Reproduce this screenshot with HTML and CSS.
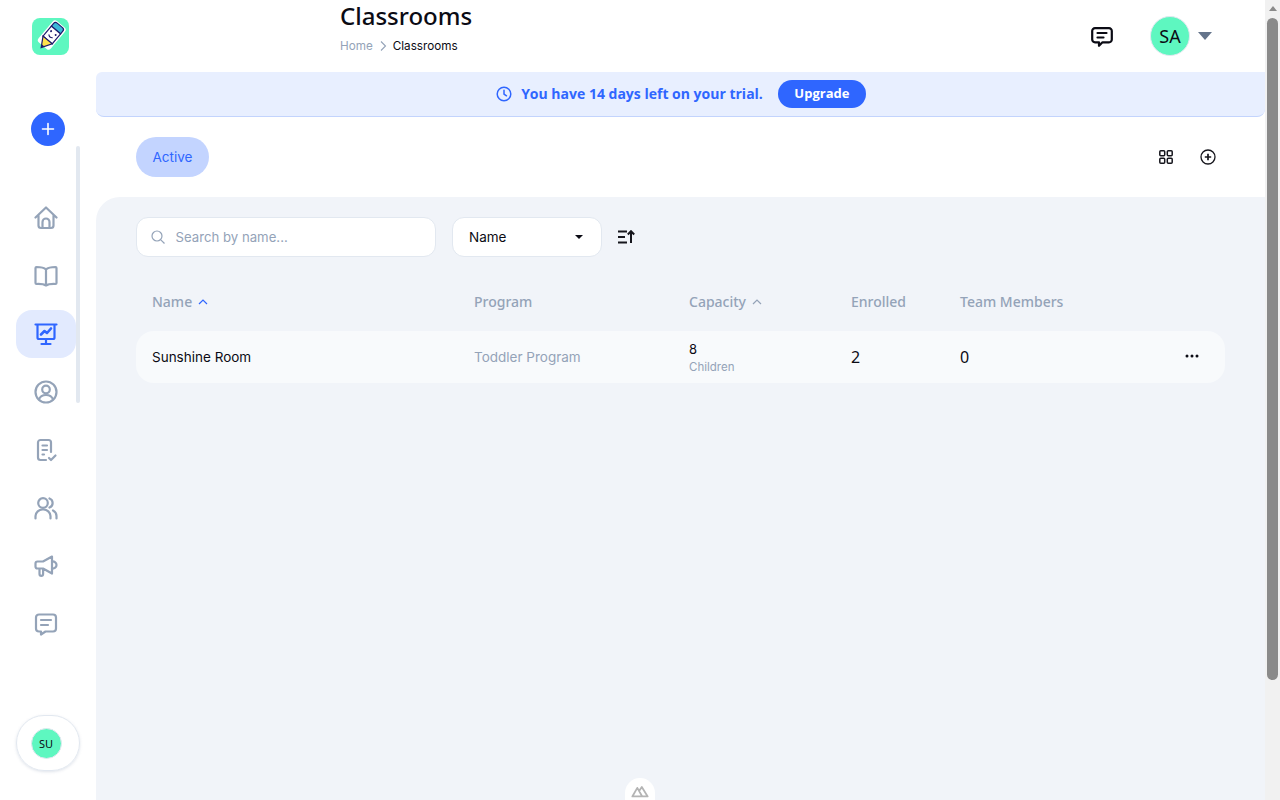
FILE: index.html
```html
<!DOCTYPE html>
<html lang="en">
<head>
    <meta charset="UTF-8">
    <meta name="viewport" content="width=device-width, initial-scale=1.0">
    <title>Classrooms</title>
    <link rel="stylesheet" href="styles.css">
</head>
<body>
    <div class="shell">
        <aside class="sidebar">
            <div class="logo">
                <svg viewBox="0 0 37 37" width="37" height="37">
                    <rect width="37" height="37" rx="8" fill="#5ef7c0"/>
                    <g transform="rotate(40 18.5 18.5)">
                        <rect x="10.500" y="2.500" width="16" height="28" rx="3" fill="#fff"/>
                        <path d="M12.500 10V6.500a2.500 2.500 0 0 1 2.500-2.500h7a2.500 2.500 0 0 1 2.500 2.500V10z" fill="#3bb8d8" stroke="#1c1a6b" stroke-width="1.200"/>
                        <path d="M12.500 10h12v13h-12z" fill="#fff" stroke="#1c1a6b" stroke-width="1.200"/>
                        <path d="M12.500 23h12l-6 10z" fill="#ffe14a" stroke="#1c1a6b" stroke-width="1.200"/>
                        <path d="M16.800 30h3.400l-1.700 3z" fill="#1c1a6b"/>
                        <circle cx="15.500" cy="14" r="1" fill="#1c1a6b"/>
                        <circle cx="21.500" cy="14" r="1" fill="#1c1a6b"/>
                        <path d="M16 18q2.500 2.500 5 0" fill="none" stroke="#1c1a6b" stroke-width="1.200"/>
                    </g>
                </svg>
            </div>
            <button class="add-btn">
                <svg viewBox="0 0 16 16" width="16" height="16"><path d="M8 2.500v11M2.500 8h11" stroke="#fff" stroke-width="1.600" stroke-linecap="round"/></svg>
            </button>
            <nav class="side-nav">
                <a class="nav-item">
                    <svg class="nav-icon" viewBox="0 0 24 24"><path d="M1.500 11.500 12 1.500l10.500 10M4.500 9V19.500a2.500 2.500 0 0 0 2.500 2.500h10a2.500 2.500 0 0 0 2.500-2.500V9M8.500 22v-6a3.500 3.500 0 0 1 7 0v6"/></svg>
                </a>
                <a class="nav-item">
                    <svg class="nav-icon" viewBox="0 0 24 24"><path d="M12 5.500C10 3.500 7 3 2.500 3A1 1 0 0 0 1.500 4v15a1 1 0 0 0 1 1c4.500-.2 7.500.2 9.500 1.500 2-1.300 5-1.700 9.500-1.500a1 1 0 0 0 1-1V4a1 1 0 0 0-1-1C17 3 14 3.500 12 5.500zM12 5.500v16"/></svg>
                </a>
                <a class="nav-item active">
                    <svg class="nav-icon" viewBox="0 0 24 24"><path d="M1.500 2.500h21M3.500 2.500v13a1.500 1.500 0 0 0 1.500 1.500h14a1.500 1.500 0 0 0 1.500-1.500v-13M12 17v4.500M7.500 22h9"/><path d="m7 12.500 3.500-3.500 2.500 2L17 6.500" stroke-width="2.600"/></svg>
                </a>
                <a class="nav-item">
                    <svg class="nav-icon" viewBox="0 0 24 24"><circle cx="12" cy="12" r="10.500"/><circle cx="12" cy="9.500" r="3.800"/><path d="M5 19.500c1-3 3.500-4.500 7-4.500s6 1.500 7 4.500"/></svg>
                </a>
                <a class="nav-item">
                    <svg class="nav-icon" viewBox="0 0 24 24"><path d="M12 22H6.500A2.500 2.500 0 0 1 4 19.500v-15A2.500 2.500 0 0 1 6.500 2h8A2.500 2.500 0 0 1 17 4.500V14M8.500 7.500h4.500M8.500 12h4.500M8.500 16.500h1.500M15 20l2 2 4.500-4.500"/></svg>
                </a>
                <a class="nav-item">
                    <svg class="nav-icon" viewBox="0 0 24 24"><circle cx="9" cy="7" r="4.800"/><path d="M1.500 22.500v-2.500a7 7 0 0 1 7-6.500h1a7 7 0 0 1 7 6.500v2.500M15.500 2.500a4.800 4.800 0 0 1 0 9M19 14.500c2 1 3.500 3 3.500 5.500v2.500"/></svg>
                </a>
                <a class="nav-item">
                    <svg class="nav-icon" viewBox="0 0 24 24"><path d="M18 2.500 9 7.500H3.500a2 2 0 0 0-2 2v3a2 2 0 0 0 2 2H9l9 5zM5.500 14.500v5.500a1.800 1.800 0 0 0 3.600 0v-5.500"/><path d="M18 7.500c2.600-.3 4.500 1.300 4.500 3.500s-1.900 3.800-4.500 3.500"/></svg>
                </a>
                <a class="nav-item">
                    <svg class="nav-icon" viewBox="0 0 24 24"><path d="M5 2.500h14A3 3 0 0 1 22 5.500v11a3 3 0 0 1-3 3h-7.500L7 22.500v-3H5a3 3 0 0 1-3-3v-11a3 3 0 0 1 3-3zM7 8h10M7 13h7"/></svg>
                </a>
            </nav>
            <div class="side-scroll"></div>
            <div class="user-btn"><span class="avatar small">SU</span></div>
        </aside>

        <div class="content">
            <header class="topbar">
                <div class="title-block">
                    <h1>Classrooms</h1>
                    <div class="breadcrumb">
                        <span class="crumb-home">Home</span>
                        <svg viewBox="0 0 10 12" width="10" height="12"><path d="m3 1.500 4.500 4.500L3 10.500" fill="none" stroke="#94a3b8" stroke-width="1.100"/></svg>
                        <span>Classrooms</span>
                    </div>
                </div>
                <div class="top-actions">
                    <svg class="chat-icon" viewBox="0 0 22 20" width="22" height="20"><path d="M4 1.200h14a2.800 2.800 0 0 1 2.800 2.800v8.500a2.800 2.800 0 0 1-2.800 2.800h-6.500L8 18.800v-3.500H4a2.800 2.800 0 0 1-2.800-2.800V4A2.800 2.800 0 0 1 4 1.200zM6.500 6h9M6.500 10.500h6" fill="none" stroke="#0b0b14" stroke-width="2.200" stroke-linecap="round" stroke-linejoin="round"/></svg>
                    <span class="avatar">SA</span>
                    <span class="caret"></span>
                </div>
            </header>

            <div class="trial-banner">
                <svg viewBox="0 0 16 16" width="16" height="16"><circle cx="8" cy="8" r="6.800" fill="none" stroke="#2f66ff" stroke-width="1.500"/><path d="M8 4.200V8l2.500 1.800" fill="none" stroke="#2f66ff" stroke-width="1.500" stroke-linecap="round"/></svg>
                <span class="trial-text">You have 14 days left on your trial.</span>
                <button class="upgrade-btn">Upgrade</button>
            </div>

            <div class="tabs-row">
                <span class="tab-active">Active</span>
                <div class="view-actions">
                    <svg viewBox="0 0 14 14" width="14" height="14"><g fill="none" stroke="#16161d" stroke-width="1.500"><rect x=".8" y=".8" width="4.900" height="4.900" rx="1"/><rect x="8.300" y=".8" width="4.900" height="4.900" rx="1"/><rect x=".8" y="8.300" width="4.900" height="4.900" rx="1"/><rect x="8.300" y="8.300" width="4.900" height="4.900" rx="1"/></g></svg>
                    <svg viewBox="0 0 16 16" width="16" height="16"><circle cx="8" cy="8" r="7" fill="none" stroke="#16161d" stroke-width="1.300"/><path d="M8 4.800v6.400M4.800 8h6.400" stroke="#16161d" stroke-width="1.700"/></svg>
                </div>
            </div>

            <section class="panel">
                <div class="filters">
                    <div class="search-box">
                        <svg viewBox="0 0 16 16" width="16" height="16"><circle cx="7" cy="7" r="5" fill="none" stroke="#94a3b8" stroke-width="1.200"/><path d="m10.800 10.800 3.700 3.700" stroke="#94a3b8" stroke-width="1.200"/></svg>
                        <span>Search by name...</span>
                    </div>
                    <div class="select-box">
                        <span>Name</span>
                        <span class="select-arrow"></span>
                    </div>
                    <svg class="sort-icon" viewBox="0 0 18 14" width="18" height="14"><path d="M1 1.500h9M1 7h7M1 12.500h9M14 13V1.500M10.800 4.500 14 1.200l3.200 3.300" fill="none" stroke="#16161d" stroke-width="2"/></svg>
                </div>

                <div class="table-row table-head">
                    <div class="sorted">Name <svg viewBox="0 0 10 6" width="10" height="6"><path d="m1 5 4-4 4 4" fill="none" stroke="#2f66ff" stroke-width="1.200"/></svg></div>
                    <div>Program</div>
                    <div class="sorted">Capacity <svg viewBox="0 0 10 6" width="10" height="6"><path d="m1 5 4-4 4 4" fill="none" stroke="#94a3b8" stroke-width="1.200"/></svg></div>
                    <div>Enrolled</div>
                    <div>Team Members</div>
                </div>

                <div class="table-row room-row">
                    <div class="room-name">Sunshine Room</div>
                    <div class="room-program">Toddler Program</div>
                    <div class="room-capacity">
                        <span class="cap-num">8</span>
                        <span class="cap-label">Children</span>
                    </div>
                    <div class="room-num">2</div>
                    <div class="room-num">0</div>
                    <svg class="more-icon" viewBox="0 0 14 4" width="14" height="4"><circle cx="2" cy="2" r="1.500"/><circle cx="7" cy="2" r="1.500"/><circle cx="12" cy="2" r="1.500"/></svg>
                </div>

                <div class="nuxt-badge">
                    <svg viewBox="0 0 20 14" width="18" height="13"><path d="M1.500 12.500 7 3l5.500 9.500zM9 6.500 12 2l6.500 10.500H12.500" fill="none" stroke="#b4b4b4" stroke-width="2" stroke-linejoin="round"/></svg>
                </div>
            </section>
        </div>

        <div class="page-scroll">
            <span class="scroll-up"></span>
            <span class="scroll-thumb"></span>
        </div>
    </div>
</body>
</html>
```

FILE: styles.css
```css
* {
    box-sizing: border-box;
}
html, body {
    margin: 0;
    height: 100%;
    overflow: hidden;
}
body {
    font-family: "Inter", "Liberation Sans", sans-serif;
    background-color: #fff;
    color: #0b0b14;
}
.shell {
    display: flex;
    height: 800px;
}

/* sidebar */
.sidebar {
    position: relative;
    width: 96px;
    flex: none;
    padding-top: 18px;
    display: flex;
    flex-direction: column;
}
.logo {
    margin-left: 32px;
    height: 37px;
}
.add-btn {
    width: 34px;
    height: 34px;
    margin: 57px 0 0 31px;
    padding: 0;
    border: none;
    border-radius: 50%;
    background-color: #2f66ff;
    display: flex;
    align-items: center;
    justify-content: center;
}
.side-nav {
    margin: 48px 0 0 16px;
    width: 60px;
    display: flex;
    flex-direction: column;
    gap: 10px;
}
.nav-item {
    height: 48px;
    border-radius: 16px;
    display: flex;
    align-items: center;
    justify-content: center;
}
.nav-item.active {
    background-color: #e2eafe;
}
.nav-icon {
    width: 24px;
    height: 24px;
    fill: none;
    stroke: #94a3b8;
    stroke-width: 2.200;
    stroke-linecap: round;
    stroke-linejoin: round;
}
.active .nav-icon {
    stroke: #2f66ff;
}
.side-scroll {
    position: absolute;
    left: 76px;
    top: 146px;
    width: 4px;
    height: 257px;
    border-radius: 2px;
    background-color: #e2e8f0;
}
.user-btn {
    position: absolute;
    left: 16px;
    top: 715px;
    width: 64px;
    height: 56px;
    padding-right: 4px;
    border: 1px solid #e2e8f0;
    border-radius: 28px;
    box-shadow: 0 1px 3px rgba(148, 163, 184, 0.3);
    display: flex;
    align-items: center;
    justify-content: center;
}
.avatar {
    width: 40px;
    height: 40px;
    border-radius: 50%;
    background-color: #5ef7c0;
    border: 1px solid #e2e8f0;
    display: flex;
    align-items: center;
    justify-content: center;
    font-family: "Noto Sans", sans-serif;
    font-size: 18px;
}
.avatar.small {
    width: 31px;
    height: 31px;
    font-size: 11px;
}

/* header */
.content {
    width: 1169px;
    flex: none;
    display: flex;
    flex-direction: column;
}
.topbar {
    height: 72px;
    flex: none;
    padding-left: 244px;
    display: flex;
    justify-content: space-between;
}
h1 {
    margin: 0;
    font-family: "Noto Sans", sans-serif;
    font-size: 24px;
    font-weight: 500;
    line-height: 33px;
    margin-top: -1px;
}
.breadcrumb {
    margin-top: 6px;
    font-size: 11.700px;
    line-height: 16px;
    display: flex;
    align-items: center;
    gap: 5px;
}
.crumb-home {
    color: #94a3b8;
}
.top-actions {
    display: flex;
    align-items: center;
    padding-right: 53px;
    padding-bottom: 1px;
}
.chat-icon {
    margin-right: 37px;
    margin-top: 2px;
}
.caret {
    margin-left: 8px;
    margin-top: 1px;
    border-left: 7px solid transparent;
    border-right: 7px solid transparent;
    border-top: 8px solid #64748b;
}

/* trial banner */
.trial-banner {
    height: 45px;
    flex: none;
    display: flex;
    align-items: center;
    justify-content: center;
    padding-left: 1px;
    background-color: #e8efff;
    border-bottom: 1px solid #c3d4fd;
    border-radius: 6px 0 8px 8px;
}
.trial-text {
    margin: 0 15px 0 9px;
    padding-bottom: 2px;
    font-family: "Open Sans", sans-serif;
    font-size: 14px;
    font-weight: 700;
    color: #2f66ff;
}
.upgrade-btn {
    width: 88px;
    height: 28px;
    padding: 0 0 2px;
    border: none;
    border-radius: 14px;
    background-color: #2f66ff;
    color: #fff;
    font-family: "Open Sans", sans-serif;
    font-size: 13px;
    font-weight: 700;
}

/* tabs */
.tabs-row {
    height: 80px;
    flex: none;
    padding: 0 49px 0 40px;
    display: flex;
    align-items: center;
    justify-content: space-between;
}
.tab-active {
    width: 73px;
    height: 40px;
    border-radius: 20px;
    background-color: #c3d4ff;
    color: #2f66ff;
    font-size: 13.500px;
    display: flex;
    align-items: center;
    justify-content: center;
}
.view-actions {
    display: flex;
    align-items: center;
    gap: 27px;
}

/* panel */
.panel {
    position: relative;
    flex: 1;
    padding: 20px 40px;
    background-color: #f1f4f9;
    border-radius: 24px 0 0 0;
}
.filters {
    display: flex;
    align-items: center;
}
.search-box, .select-box {
    height: 40px;
    background-color: #fff;
    border: 1px solid #e2e8f0;
    border-radius: 12px;
    font-size: 13.500px;
    display: flex;
    align-items: center;
}
.search-box {
    width: 300px;
    padding-left: 13px;
    gap: 9.500px;
    font-size: 13.200px;
    color: #94a3b8;
}
.select-box {
    width: 150px;
    margin-left: 16px;
    padding: 0 18px 0 16px;
    justify-content: space-between;
}
.select-arrow {
    border-left: 4px solid transparent;
    border-right: 4px solid transparent;
    border-top: 4px solid #0b0b14;
}
.sort-icon {
    margin-left: 15px;
}

/* table */
.table-row {
    display: grid;
    grid-template-columns: 322px 215px 162px 109px 1fr;
    padding-left: 16px;
    align-items: center;
}
.table-head {
    margin-top: 24px;
    height: 40px;
    margin-bottom: 10px;
    font-family: "Noto Sans", sans-serif;
    font-size: 14px;
    font-weight: 500;
    color: #94a3b8;
}
.sorted svg {
    margin-left: 2px;
    vertical-align: 2px;
}
.room-row {
    position: relative;
    height: 52px;
    border-radius: 18px;
    background-color: #f8fafc;
    font-size: 13.500px;
}
.room-program {
    color: #94a3b8;
}
.room-capacity {
    display: flex;
    flex-direction: column;
    gap: 2px;
}
.cap-num {
    font-size: 13px;
    line-height: 17px;
}
.cap-label {
    font-size: 11.500px;
    line-height: 14px;
    color: #94a3b8;
}
.room-num {
    font-family: "Noto Sans", sans-serif;
    font-size: 16px;
}
.more-icon {
    position: absolute;
    right: 26px;
    top: 23px;
    fill: #0b0b14;
}
.nuxt-badge {
    position: absolute;
    left: 529px;
    bottom: -18px;
    width: 30px;
    height: 40px;
    padding-top: 7px;
    border-radius: 15px;
    background-color: #fff;
    display: flex;
    justify-content: center;
}

/* browser scrollbar */
.page-scroll {
    width: 15px;
    flex: none;
    background-color: #f1f1f1;
    display: flex;
    flex-direction: column;
    align-items: center;
}
.scroll-up {
    margin-top: 6px;
    border-left: 4px solid transparent;
    border-right: 4px solid transparent;
    border-bottom: 5px solid #8a8a8a;
}
.scroll-thumb {
    margin-top: 7px;
    width: 11px;
    height: 662px;
    border-radius: 6px;
    background-color: #8a8a8a;
}
```
